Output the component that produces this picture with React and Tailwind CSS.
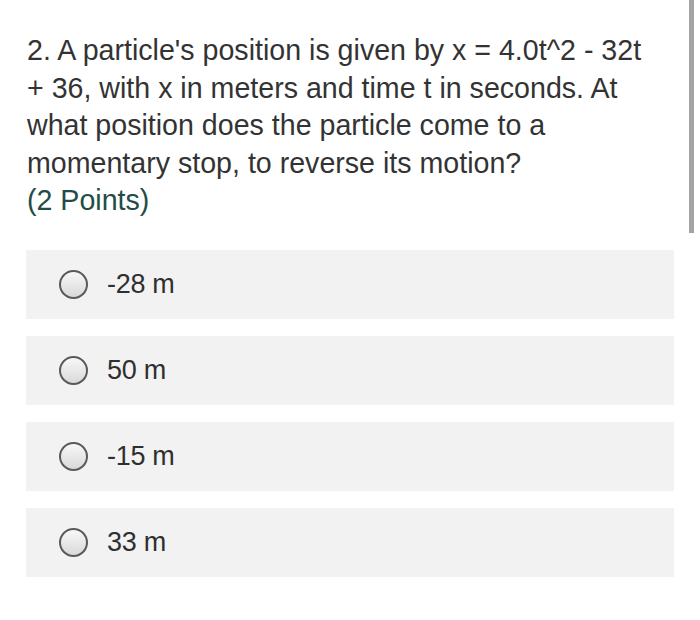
import React from 'react';

const options = ['-28 m', '50 m', '-15 m', '33 m'];

const Radio = () => (
  <span className="w-[29px] h-[29px] rounded-full border-2 border-[#5a5a5a] bg-gradient-to-b from-[#f8f8f8] to-[#d9d9d9] shrink-0" />
);

const App = () => {
  return (
    <div className="relative w-[700px] h-[620px] bg-white overflow-hidden font-['Liberation_Sans',Arial,sans-serif]">
      {/* scrollbar */}
      <div className="absolute right-[6px] top-0 w-[5px] h-[233px] bg-[#a3a3a3]" />

      <div className="pl-[27px] pr-[26px] pt-[32px]">
        <p className="text-[28.6px] leading-[37.5px] text-[#333333]">
          2. A particle's position is given by x = 4.0t^2 - 32t
          <br />+ 36, with x in meters and time t in seconds. At
          <br />what position does the particle come to a
          <br />momentary stop, to reverse its motion?
        </p>
        <p className="text-[28.6px] leading-[37.5px] text-[#1f4d47]">(2 Points)</p>

        <div className="mt-[30px] flex flex-col gap-[17px]">
          {options.map((opt) => (
            <div key={opt} className="h-[69px] bg-[#f2f2f2] flex items-center pl-[33px] gap-[19px] w-[648px] -ml-[1px]">
              <Radio />
              <span className="text-[27px] text-[#2f2f2f] tracking-[-0.3px]">{opt}</span>
            </div>
          ))}
        </div>
      </div>
    </div>
  );
};

export default App;
